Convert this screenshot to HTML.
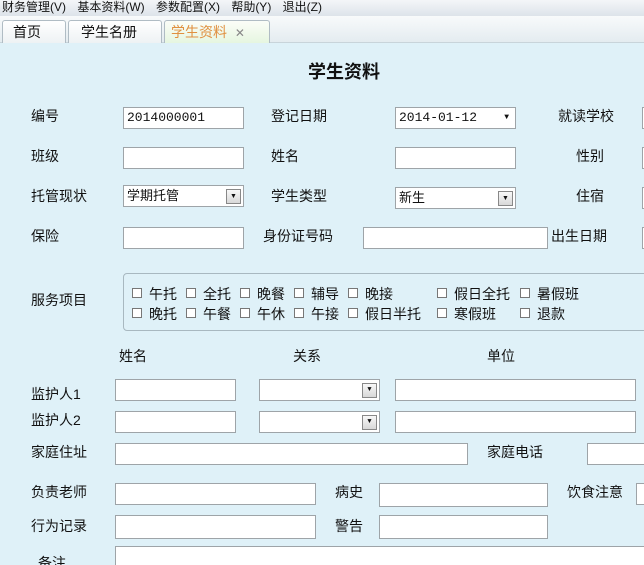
<!DOCTYPE html>
<html><head><meta charset="utf-8"><style>
*{margin:0;padding:0;box-sizing:border-box}
html,body{width:644px;height:565px;overflow:hidden}
body{background:#dff1f8;font-family:"Liberation Sans","Noto Sans CJK SC","WenQuanYi Zen Hei",sans-serif;font-size:14px;color:#111;position:relative}
.a{position:absolute;white-space:nowrap}
.menu{left:0;top:0;width:644px;height:16px;background:linear-gradient(#f4f6f8,#dde3ea);font-size:12px;line-height:14px;padding-left:2px;word-spacing:8px}
.tabs{left:0;top:16px;width:644px;height:27px;background:linear-gradient(#f8fafb,#e4ecf0);border-bottom:1px solid #c8d4da}
.tab{position:absolute;top:4px;height:23px;font-size:14px;line-height:22px;padding-left:10px;border:1px solid #b0bcc4;border-bottom:none;border-radius:3px 3px 0 0;background:linear-gradient(#ffffff,#eef2f4)}
.in{position:absolute;background:#fff;border:1px solid #9ea4a8;height:22px;font-size:13px;line-height:20px;padding-left:3px;font-family:"Liberation Mono","DejaVu Sans Mono",monospace}
.dd{position:absolute;right:2px;top:3px;width:15px;height:15px;background:linear-gradient(#f8f8f8,#d8d8d8);border:1px solid #888;font-size:7px;line-height:13px;text-align:center}
.cb{position:absolute;width:10px;height:10px;border:1px solid #777;background:#fff}
.grp{left:123px;top:273px;width:530px;height:58px;border:1px solid #a8b8c0;border-radius:4px}
</style></head><body>
<div class="a menu">财务管理(V) 基本资料(W) 参数配置(X) 帮助(Y) 退出(Z)</div>
<div class="a tabs">
<div class="tab" style="left:2px;width:64px">首页</div>
<div class="tab" style="left:68px;width:94px;padding-left:12px">学生名册</div>
<div class="tab" style="left:164px;width:106px;background:linear-gradient(#fbfdf8,#e6f6e0);color:#e09040;padding-left:6px">学生资料 <span style="color:#888;font-size:12px;margin-left:4px">✕</span></div>
</div>
<div class="a" style="left:308px;top:58px;font-size:18px;font-weight:bold">学生资料</div>

<div class="a" style="left:31px;top:106px">编号</div>
<div class="in" style="left:123px;top:107px;width:121px">2014000001</div>
<div class="a" style="left:271px;top:106px">登记日期</div>
<div class="in" style="left:395px;top:107px;width:121px">2014-01-12<span style="position:absolute;right:6px;font-size:8px">▼</span></div>
<div class="a" style="left:558px;top:106px">就读学校</div>
<div class="in" style="left:642px;top:107px;width:10px"></div>

<div class="a" style="left:31px;top:146px">班级</div>
<div class="in" style="left:123px;top:147px;width:121px"></div>
<div class="a" style="left:271px;top:146px">姓名</div>
<div class="in" style="left:395px;top:147px;width:121px"></div>
<div class="a" style="left:576px;top:146px">性别</div>
<div class="in" style="left:642px;top:147px;width:10px"></div>

<div class="a" style="left:31px;top:186px">托管现状</div>
<div class="in" style="left:123px;top:185px;width:121px;font-family:inherit">学期托管<div class="dd">▼</div></div>
<div class="a" style="left:271px;top:186px">学生类型</div>
<div class="in" style="left:395px;top:187px;width:121px;font-family:inherit">新生<div class="dd">▼</div></div>
<div class="a" style="left:576px;top:186px">住宿</div>
<div class="in" style="left:642px;top:187px;width:10px"></div>

<div class="a" style="left:31px;top:226px">保险</div>
<div class="in" style="left:123px;top:227px;width:121px"></div>
<div class="a" style="left:263px;top:226px">身份证号码</div>
<div class="in" style="left:363px;top:227px;width:185px"></div>
<div class="a" style="left:551px;top:226px">出生日期</div>
<div class="in" style="left:642px;top:227px;width:10px"></div>

<div class="a" style="left:31px;top:290px">服务项目</div>
<div class="a grp"></div>
<div class="cb" style="left:132px;top:288px"></div><div class="a" style="left:149px;top:284px">午托</div>
<div class="cb" style="left:186px;top:288px"></div><div class="a" style="left:203px;top:284px">全托</div>
<div class="cb" style="left:240px;top:288px"></div><div class="a" style="left:257px;top:284px">晚餐</div>
<div class="cb" style="left:294px;top:288px"></div><div class="a" style="left:311px;top:284px">辅导</div>
<div class="cb" style="left:348px;top:288px"></div><div class="a" style="left:365px;top:284px">晚接</div>
<div class="cb" style="left:437px;top:288px"></div><div class="a" style="left:454px;top:284px">假日全托</div>
<div class="cb" style="left:520px;top:288px"></div><div class="a" style="left:537px;top:284px">暑假班</div>
<div class="cb" style="left:132px;top:308px"></div><div class="a" style="left:149px;top:304px">晚托</div>
<div class="cb" style="left:186px;top:308px"></div><div class="a" style="left:203px;top:304px">午餐</div>
<div class="cb" style="left:240px;top:308px"></div><div class="a" style="left:257px;top:304px">午休</div>
<div class="cb" style="left:294px;top:308px"></div><div class="a" style="left:311px;top:304px">午接</div>
<div class="cb" style="left:348px;top:308px"></div><div class="a" style="left:365px;top:304px">假日半托</div>
<div class="cb" style="left:437px;top:308px"></div><div class="a" style="left:454px;top:304px">寒假班</div>
<div class="cb" style="left:520px;top:308px"></div><div class="a" style="left:537px;top:304px">退款</div>

<div class="a" style="left:119px;top:346px">姓名</div>
<div class="a" style="left:293px;top:346px">关系</div>
<div class="a" style="left:487px;top:346px">单位</div>

<div class="a" style="left:31px;top:384px">监护人1</div>
<div class="in" style="left:115px;top:379px;width:121px"></div>
<div class="in" style="left:259px;top:379px;width:121px"><div class="dd">▼</div></div>
<div class="in" style="left:395px;top:379px;width:241px"></div>
<div class="a" style="left:31px;top:410px">监护人2</div>
<div class="in" style="left:115px;top:411px;width:121px"></div>
<div class="in" style="left:259px;top:411px;width:121px"><div class="dd">▼</div></div>
<div class="in" style="left:395px;top:411px;width:241px"></div>

<div class="a" style="left:31px;top:442px">家庭住址</div>
<div class="in" style="left:115px;top:443px;width:353px"></div>
<div class="a" style="left:487px;top:442px">家庭电话</div>
<div class="in" style="left:587px;top:443px;width:70px"></div>

<div class="a" style="left:31px;top:482px">负责老师</div>
<div class="in" style="left:115px;top:483px;width:201px"></div>
<div class="a" style="left:335px;top:482px">病史</div>
<div class="in" style="left:379px;top:483px;width:169px;height:24px"></div>
<div class="a" style="left:567px;top:482px">饮食注意</div>
<div class="in" style="left:636px;top:483px;width:20px"></div>

<div class="a" style="left:31px;top:516px">行为记录</div>
<div class="in" style="left:115px;top:515px;width:201px;height:24px"></div>
<div class="a" style="left:335px;top:516px">警告</div>
<div class="in" style="left:379px;top:515px;width:169px;height:24px"></div>

<div class="a" style="left:38px;top:553px">备注</div>
<div class="in" style="left:115px;top:546px;width:540px;height:40px"></div>
</body></html>
